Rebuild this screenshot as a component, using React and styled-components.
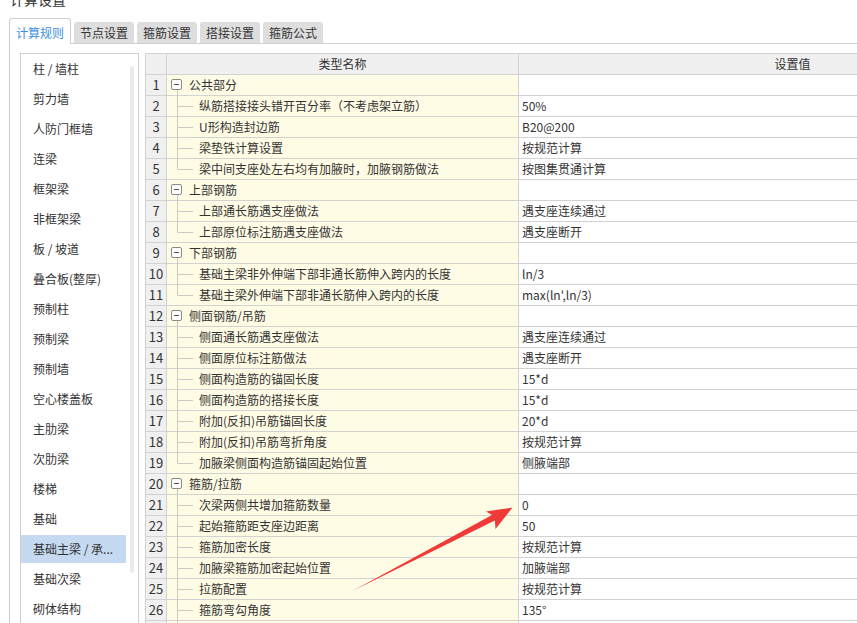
import styled, { createGlobalStyle } from "styled-components";

const GlobalStyle = createGlobalStyle`
  body {
    margin: 0;
    background: #fff;
    font-family: "Noto Sans CJK SC", "Noto Sans", sans-serif;
    color: #333;
  }
`;

const Page = styled.div`
  width: 857px;
  height: 623px;
  overflow: hidden;
  position: relative;
  display: flex;
  flex-direction: column;
  background: #fff;
`;

const TitleBar = styled.div`
  height: 18px;
  padding-left: 10px;
`;

const Title = styled.div`
  margin-top: -8px;
  font-size: 14px;
  line-height: 14px;
  color: #333;
`;

const TabStrip = styled.div`
  display: flex;
  align-items: flex-end;
  gap: 3px;
  padding-left: 9px;
  height: 25px;
  position: relative;
  z-index: 1;
`;

const Tab = styled.div`
  box-sizing: border-box;
  padding: 0 6px;
  font-size: 12px;
  display: flex;
  align-items: center;
  justify-content: center;
  border-radius: 3px 3px 0 0;
  white-space: nowrap;
  ${(p) =>
    p.$active
      ? `
    height: 26px;
    margin-bottom: -1px;
    background: #fff;
    color: #3c8ee0;
    border: 1px solid #cfcfcf;
    border-bottom: none;
    width: 62px;
    padding-top: 2px;
  `
      : `
    height: 21px;
    background: #dedede;
    color: #333;
    width: 60px;
  `}
`;

const TabPanel = styled.div`
  flex: 1;
  display: flex;
  align-items: flex-start;
  gap: 6px;
  margin-left: 9px;
  border-top: 1px solid #cfcfcf;
  border-left: 1px solid #cfcfcf;
  padding: 9px 0 0 10px;
  overflow: hidden;
`;

const SideList = styled.div`
  flex: none;
  width: 117px;
  height: 620px;
  border: 1px solid #cfcfcf;
  display: flex;
  gap: 4px;
`;

const ListItems = styled.div`
  width: 105px;
  padding-top: 1px;
  display: flex;
  flex-direction: column;
  gap: 2px;
`;

const ListItem = styled.div`
  height: 28px;
  line-height: 28px;
  padding-left: 12px;
  font-size: 12px;
  white-space: nowrap;
  overflow: hidden;
  color: #333;
  background: ${(p) => (p.$selected ? "#c5daf0" : "transparent")};
`;

const ScrollTrack = styled.div`
  width: 4px;
  height: 507px;
  margin-top: 12px;
  border-radius: 2px;
  background: #ebebeb;
`;

const Grid = styled.div`
  flex: none;
  border-left: 1px solid #d2d2d2;
  border-top: 1px solid #d2d2d2;
  font-size: 12px;
`;

const Row = styled.div`
  display: grid;
  grid-template-columns: 21px 352px 548px;
  height: 21px;
`;

const Cell = styled.div`
  box-sizing: border-box;
  border-right: 1px solid #d2d2d2;
  border-bottom: 1px solid #d2d2d2;
  line-height: 20px;
  white-space: nowrap;
  overflow: visible;
`;

const HeadCell = styled(Cell)`
  background: #f0f0f0;
  text-align: center;
`;

const NumCell = styled(Cell)`
  background: #f0f0f0;
  text-align: center;
  font-size: 13px;
`;

const NameCell = styled(Cell)`
  background: #fffce6;
  display: flex;
  align-items: center;
`;

const ValueCell = styled(Cell)`
  background: #fff;
  padding-left: 3px;
`;

const ChildText = styled.span`
  margin-left: 6px;
`;

const Arrow = styled.svg`
  position: absolute;
  left: 0;
  top: 0;
  pointer-events: none;
`;

const sideItems = [
  "柱 / 墙柱",
  "剪力墙",
  "人防门框墙",
  "连梁",
  "框架梁",
  "非框架梁",
  "板 / 坡道",
  "叠合板(整厚)",
  "预制柱",
  "预制梁",
  "预制墙",
  "空心楼盖板",
  "主肋梁",
  "次肋梁",
  "楼梯",
  "基础",
  "基础主梁 / 承...",
  "基础次梁",
  "砌体结构",
];

const rows = [
  { group: "公共部分" },
  { name: "纵筋搭接接头错开百分率（不考虑架立筋）", value: "50%" },
  { name: "U形构造封边筋", value: "B20@200" },
  { name: "梁垫铁计算设置", value: "按规范计算" },
  { name: "梁中间支座处左右均有加腋时，加腋钢筋做法", value: "按图集贯通计算", last: true },
  { group: "上部钢筋" },
  { name: "上部通长筋遇支座做法", value: "遇支座连续通过" },
  { name: "上部原位标注筋遇支座做法", value: "遇支座断开", last: true },
  { group: "下部钢筋" },
  { name: "基础主梁非外伸端下部非通长筋伸入跨内的长度", value: "ln/3" },
  { name: "基础主梁外伸端下部非通长筋伸入跨内的长度", value: "max(ln',ln/3)", last: true },
  { group: "侧面钢筋/吊筋" },
  { name: "侧面通长筋遇支座做法", value: "遇支座连续通过" },
  { name: "侧面原位标注筋做法", value: "遇支座断开" },
  { name: "侧面构造筋的锚固长度", value: "15*d" },
  { name: "侧面构造筋的搭接长度", value: "15*d" },
  { name: "附加(反扣)吊筋锚固长度", value: "20*d" },
  { name: "附加(反扣)吊筋弯折角度", value: "按规范计算" },
  { name: "加腋梁侧面构造筋锚固起始位置", value: "侧腋端部", last: true },
  { group: "箍筋/拉筋" },
  { name: "次梁两侧共增加箍筋数量", value: "0" },
  { name: "起始箍筋距支座边距离", value: "50" },
  { name: "箍筋加密长度", value: "按规范计算" },
  { name: "加腋梁箍筋加密起始位置", value: "加腋端部" },
  { name: "拉筋配置", value: "按规范计算" },
  { name: "箍筋弯勾角度", value: "135°" },
  { name: "", value: "", blank: true },
];

const lineColor = "#cbcbc4";

const GroupIcon = () => (
  <svg width="22" height="20" style={{ overflow: "visible", flex: "none" }}>
    <rect x="4.5" y="4.5" width="10" height="10" rx="1.5" fill="#fff" stroke="#8a8a8a" />
    <line x1="7" y1="9.5" x2="12" y2="9.5" stroke="#555" />
    <line x1="10.5" y1="15" x2="10.5" y2="21" stroke={lineColor} />
  </svg>
);

const TreeGuide = ({ last }) => (
  <svg width="26" height="20" style={{ overflow: "visible", flex: "none" }}>
    <line x1="10.5" y1="-1" x2="10.5" y2={last ? 10 : 21} stroke={lineColor} />
    <line x1="10.5" y1="10.5" x2="26" y2="10.5" stroke={lineColor} />
  </svg>
);

export default function App() {
  return (
    <>
      <GlobalStyle />
      <Page>
        <TitleBar>
          <Title>计算设置</Title>
        </TitleBar>
        <TabStrip>
          <Tab $active>计算规则</Tab>
          <Tab>节点设置</Tab>
          <Tab>箍筋设置</Tab>
          <Tab>搭接设置</Tab>
          <Tab>箍筋公式</Tab>
        </TabStrip>
        <TabPanel>
          <SideList>
            <ListItems>
              {sideItems.map((t) => (
                <ListItem key={t} $selected={t.startsWith("基础主梁")}>
                  {t}
                </ListItem>
              ))}
            </ListItems>
            <ScrollTrack />
          </SideList>
          <Grid>
            <Row>
              <HeadCell />
              <HeadCell>类型名称</HeadCell>
              <HeadCell>设置值</HeadCell>
            </Row>
            {rows.map((r, i) => (
              <Row key={i}>
                <NumCell>{r.blank ? "" : i + 1}</NumCell>
                {r.group ? (
                  <NameCell>
                    <GroupIcon />
                    <span>{r.group}</span>
                  </NameCell>
                ) : (
                  <NameCell>
                    <TreeGuide last={r.last} />
                    <ChildText>{r.name}</ChildText>
                  </NameCell>
                )}
                <ValueCell>{r.value}</ValueCell>
              </Row>
            ))}
          </Grid>
        </TabPanel>
        <Arrow width="857" height="623" viewBox="0 0 857 623">
          <polygon
            points="352.5,591 492,515 486,511.5 512.5,507.5 495.5,529 494.8,520.5"
            fill="#f03a3a"
          />
        </Arrow>
      </Page>
    </>
  );
}
